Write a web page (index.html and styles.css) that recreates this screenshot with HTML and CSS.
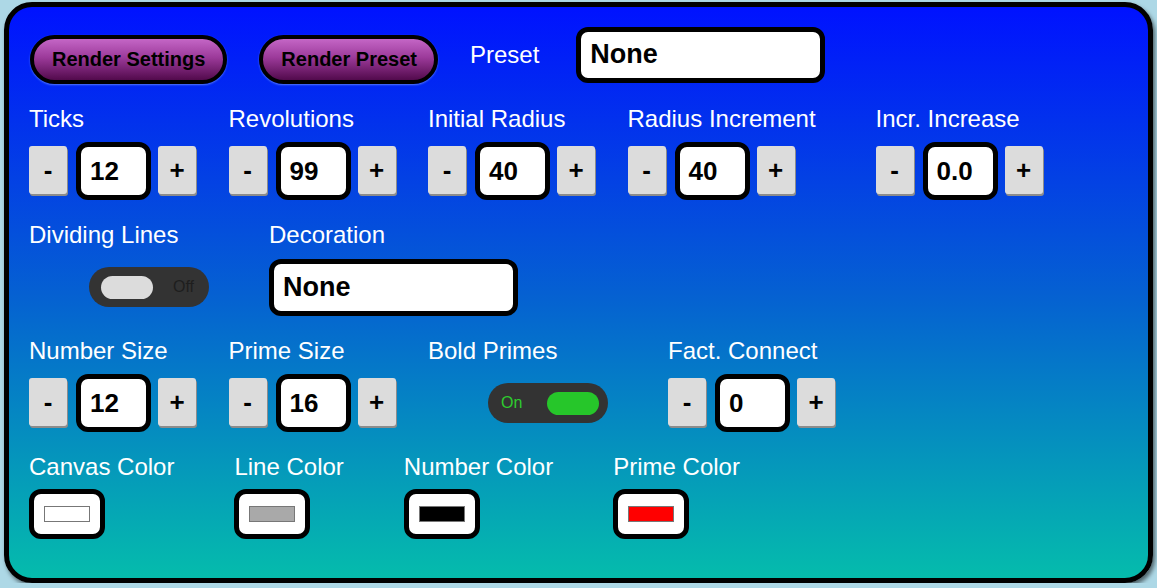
FILE: index.html
```html
<!DOCTYPE html>
<html>
<head>
<meta charset="utf-8">
<link rel="stylesheet" href="styles.css">
</head>
<body>
<div class="panel">
  <div class="toprow">
    <div class="pill">Render Settings</div>
    <div class="pill">Render Preset</div>
    <div class="toplabel">Preset</div>
    <div class="textbox top">None</div>
  </div>

  <div class="row">
    <div class="group">
      <div class="label">Ticks</div>
      <div class="ctrl"><div class="stepper"><div class="sbtn">-</div><div class="num">12</div><div class="sbtn">+</div></div></div>
    </div>
    <div class="group">
      <div class="label">Revolutions</div>
      <div class="ctrl"><div class="stepper"><div class="sbtn">-</div><div class="num">99</div><div class="sbtn">+</div></div></div>
    </div>
    <div class="group">
      <div class="label">Initial Radius</div>
      <div class="ctrl"><div class="stepper"><div class="sbtn">-</div><div class="num">40</div><div class="sbtn">+</div></div></div>
    </div>
    <div class="group">
      <div class="label">Radius Increment</div>
      <div class="ctrl"><div class="stepper"><div class="sbtn">-</div><div class="num">40</div><div class="sbtn">+</div></div></div>
    </div>
    <div class="group">
      <div class="label">Incr. Increase</div>
      <div class="ctrl"><div class="stepper"><div class="sbtn">-</div><div class="num">0.0</div><div class="sbtn">+</div></div></div>
    </div>
  </div>

  <div class="row">
    <div class="group">
      <div class="label">Dividing Lines</div>
      <div class="ctrl"><div class="toggle off"><span class="knob"></span><span class="ttext">Off</span></div></div>
    </div>
    <div class="group">
      <div class="label">Decoration</div>
      <div class="ctrl"><div class="textbox">None</div></div>
    </div>
  </div>

  <div class="row">
    <div class="group">
      <div class="label">Number Size</div>
      <div class="ctrl"><div class="stepper"><div class="sbtn">-</div><div class="num">12</div><div class="sbtn">+</div></div></div>
    </div>
    <div class="group">
      <div class="label">Prime Size</div>
      <div class="ctrl"><div class="stepper"><div class="sbtn">-</div><div class="num">16</div><div class="sbtn">+</div></div></div>
    </div>
    <div class="group">
      <div class="label">Bold Primes</div>
      <div class="ctrl"><div class="toggle on"><span class="ttext">On</span><span class="knob"></span></div></div>
    </div>
    <div class="group">
      <div class="label">Fact. Connect</div>
      <div class="ctrl"><div class="stepper"><div class="sbtn">-</div><div class="num">0</div><div class="sbtn">+</div></div></div>
    </div>
  </div>

  <div class="row">
    <div class="group">
      <div class="label">Canvas Color</div>
      <div class="ctrl colorctrl"><div class="colorbox"><span class="swatch sw-white"></span></div></div>
    </div>
    <div class="group">
      <div class="label">Line Color</div>
      <div class="ctrl colorctrl"><div class="colorbox"><span class="swatch sw-grey"></span></div></div>
    </div>
    <div class="group">
      <div class="label">Number Color</div>
      <div class="ctrl colorctrl"><div class="colorbox"><span class="swatch sw-black"></span></div></div>
    </div>
    <div class="group">
      <div class="label">Prime Color</div>
      <div class="ctrl colorctrl"><div class="colorbox"><span class="swatch sw-red"></span></div></div>
    </div>
  </div>
</div>
</body>
</html>
```

FILE: styles.css
```css
html, body {
  margin: 0;
  padding: 0;
  background: #add8e6;
}
body {
  padding: 2px 4px 0 4px;
  font-family: "Liberation Sans", Arial, sans-serif;
}
.panel {
  box-sizing: border-box;
  width: 1149px;
  height: 581px;
  border: 5px solid #000;
  border-radius: 28px;
  background: linear-gradient(to bottom, #0012ff 0%, #0560d2 50%, #05bcac 100%);
  box-shadow: 2px 3px 4px rgba(0, 0, 0, 0.55);
  padding: 20px 0 0 20px;
}
.toprow {
  display: flex;
  align-items: flex-start;
  height: 57px;
}
.pill {
  margin-top: 8px;
  height: 41px;
  line-height: 41px;
  padding: 0 18px;
  border: 4px solid #000;
  border-radius: 26px;
  background: linear-gradient(to bottom, #c466c6 0%, #9c3a9a 45%, #520a4c 100%);
  font-size: 20px;
  font-weight: bold;
  color: #000;
  margin-right: 32px;
  margin-left: 1px;
  box-shadow: 0 1px 2px rgba(160, 200, 255, 0.5);
  white-space: nowrap;
}
.pill + .pill {
  margin-left: 0;
  padding: 0 17px 0 18px;
}
.toplabel {
  margin-top: 14px;
  font-size: 24px;
  line-height: 27px;
  color: #fff;
  margin-right: 37px;
}
.textbox {
  box-sizing: border-box;
  width: 249px;
  height: 57px;
  border: 5px solid #000;
  border-radius: 12px;
  background: #fff;
  font-size: 27px;
  font-weight: bold;
  line-height: 47px;
  padding-left: 9px;
  color: #000;
}
.textbox.top {
  height: 56px;
  line-height: 44px;
}
.row {
  display: flex;
  margin-top: 21px;
}
.group {
  display: flex;
  flex-direction: column;
  align-items: flex-start;
}
.label {
  font-size: 24px;
  line-height: 27px;
  color: #fff;
  padding-right: 60px;
  white-space: nowrap;
}
.ctrl {
  margin-top: 10px;
  height: 58px;
  display: flex;
  align-items: center;
}
.colorctrl {
  margin-top: 9px;
  height: 50px;
}
.stepper {
  display: flex;
  align-items: center;
  padding-right: 32.5px;
}
.sbtn {
  box-sizing: border-box;
  width: 38px;
  height: 48px;
  margin-bottom: 3px;
  background: #dcdcdc;
  border-radius: 3px;
  box-shadow: 1px 2px 0 #8c8c8c;
  font-size: 26px;
  font-weight: bold;
  line-height: 48px;
  text-align: center;
  color: #000;
}
.num {
  box-sizing: border-box;
  width: 75px;
  height: 58px;
  margin: 0 7px 0 9px;
  border: 5px solid #000;
  border-radius: 12px;
  background: #fff;
  font-size: 26px;
  font-weight: bold;
  line-height: 48px;
  padding-left: 9px;
  color: #000;
}
.toggle {
  box-sizing: border-box;
  width: 120px;
  height: 40px;
  margin: 0 60px;
  border-radius: 20px;
  background: #333;
  display: flex;
  align-items: center;
}
.knob {
  width: 52px;
  height: 23px;
  border-radius: 12px;
  background: #dcdcdc;
}
.ttext {
  font-size: 16px;
  line-height: 20px;
}
.toggle.off {
  padding-left: 12px;
}
.toggle.off .ttext {
  margin-left: 20px;
  color: #1e1e1e;
}
.toggle.on {
  padding-left: 13px;
}
.toggle.on .ttext {
  color: #2ecc2e;
}
.toggle.on .knob {
  margin-left: 25px;
  background: #26c62a;
}
.colorbox {
  box-sizing: border-box;
  width: 76px;
  height: 50px;
  border: 5px solid #000;
  border-radius: 12px;
  background: #fff;
  display: flex;
  align-items: center;
  justify-content: center;
}
.swatch {
  box-sizing: border-box;
  width: 46px;
  height: 16px;
  border: 1px solid #777;
}
.sw-white { background: #fff; }
.sw-grey { background: #a9a9a9; }
.sw-black { background: #000; }
.sw-red { background: #ff0000; }
```
